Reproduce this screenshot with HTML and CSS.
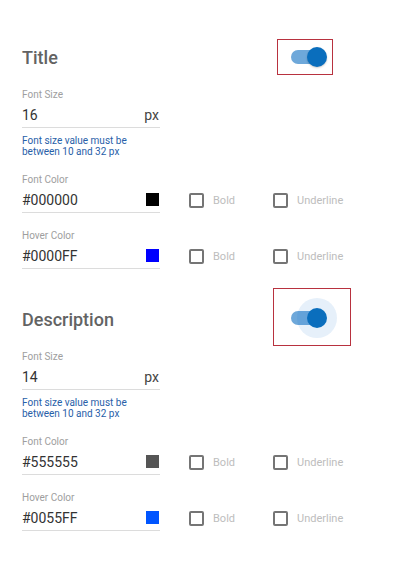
FILE: index.html
```html
<!DOCTYPE html>
<html lang="en">
  <head>
    <meta charset="UTF-8" />
    <meta name="viewport" content="width=device-width, initial-scale=1.0" />
    <title>Text Styles</title>
    <link rel="stylesheet" href="styles.css">
  </head>
  <body>
    <div class="panel">
      <!-- Title styles -->
      <section class="style-section">
        <div class="section-head">
          <h2 class="section-title">Title</h2>
          <div class="switch-box">
            <span class="switch"><span class="switch-thumb"></span></span>
          </div>
        </div>

        <div class="field">
          <label class="field-label">Font Size</label>
          <div class="field-input">
            <span class="field-value">16</span>
            <span class="field-unit">px</span>
          </div>
          <p class="field-help">Font size value must be<br />between 10 and 32 px</p>
        </div>

        <div class="field">
          <label class="field-label">Font Color</label>
          <div class="field-row">
            <div class="field-input">
              <span class="field-value">#000000</span>
              <span class="swatch" style="background: #000000"></span>
            </div>
            <label class="check"><span class="check-box"></span>Bold</label>
            <label class="check"><span class="check-box"></span>Underline</label>
          </div>
        </div>

        <div class="field">
          <label class="field-label">Hover Color</label>
          <div class="field-row">
            <div class="field-input">
              <span class="field-value">#0000FF</span>
              <span class="swatch" style="background: #0000ff"></span>
            </div>
            <label class="check"><span class="check-box"></span>Bold</label>
            <label class="check"><span class="check-box"></span>Underline</label>
          </div>
        </div>
      </section>

      <!-- Description styles -->
      <section class="style-section">
        <div class="section-head">
          <h2 class="section-title">Description</h2>
          <div class="switch-box is-focused">
            <span class="switch"><span class="switch-thumb"></span></span>
          </div>
        </div>

        <div class="field">
          <label class="field-label">Font Size</label>
          <div class="field-input">
            <span class="field-value">14</span>
            <span class="field-unit">px</span>
          </div>
          <p class="field-help">Font size value must be<br />between 10 and 32 px</p>
        </div>

        <div class="field">
          <label class="field-label">Font Color</label>
          <div class="field-row">
            <div class="field-input">
              <span class="field-value">#555555</span>
              <span class="swatch" style="background: #555555"></span>
            </div>
            <label class="check"><span class="check-box"></span>Bold</label>
            <label class="check"><span class="check-box"></span>Underline</label>
          </div>
        </div>

        <div class="field">
          <label class="field-label">Hover Color</label>
          <div class="field-row">
            <div class="field-input">
              <span class="field-value">#0055FF</span>
              <span class="swatch" style="background: #0055ff"></span>
            </div>
            <label class="check"><span class="check-box"></span>Bold</label>
            <label class="check"><span class="check-box"></span>Underline</label>
          </div>
        </div>
      </section>
    </div>
  </body>
</html>
```

FILE: styles.css
```css
body {
  margin: 0;
  background-color: #ffffff;
  font-family: Roboto, "Noto Sans", Arial, sans-serif;
}

.panel {
  padding: 38px 0 0 22px;
}

.style-section + .style-section {
  margin-top: 31px;
}

/* Section header with toggle */
.section-head {
  display: flex;
  align-items: center;
  height: 38px;
  margin-bottom: 13px;
}

.section-title {
  width: 255px;
  margin: 0;
  font-size: 18px;
  font-weight: 500;
  color: #636363;
}

.switch-box {
  display: flex;
  align-items: center;
  box-sizing: border-box;
  width: 56px;
  height: 36px;
  padding-left: 13px;
  border: 1px solid #b8323f;
}

.switch-box.is-focused {
  width: 78px;
  height: 58px;
  padding: 2px 0 0 17px;
  margin: -12px 0 -8px -4px;
}

.switch {
  position: relative;
  width: 34px;
  height: 14px;
  border-radius: 7px;
  background-color: #6ea8da;
}

.switch-thumb {
  position: absolute;
  top: -3px;
  right: -2px;
  width: 20px;
  height: 20px;
  border-radius: 50%;
  background-color: #0a6ebd;
  box-shadow: 0 1px 2px rgba(0, 0, 0, 0.2);
}

.is-focused .switch-thumb {
  box-shadow: 0 0 0 10px rgba(25, 118, 210, 0.11);
}

/* Fields */
.field + .field {
  margin-top: 17px;
}

.field-label {
  display: block;
  margin-bottom: 1px;
  font-size: 10px;
  line-height: 12px;
  color: #9e9e9e;
}

.field-row {
  display: flex;
  align-items: center;
}

.field-input {
  display: flex;
  align-items: center;
  justify-content: space-between;
  width: 138px;
  height: 26px;
  box-sizing: border-box;
  padding-right: 1px;
  border-bottom: 1px solid #dcdcdc;
  font-size: 14px;
  color: #333333;
}

.field-unit {
  color: #444444;
}

.swatch {
  width: 13px;
  height: 13px;
}

.field-help {
  margin: 7px 0 3px;
  font-size: 10px;
  line-height: 11px;
  color: #2760a8;
}

/* Checkboxes */
.check {
  display: flex;
  align-items: center;
  gap: 9px;
  width: 84px;
  font-size: 11px;
  color: #bdbdbd;
}

.field-input + .check {
  margin-left: 29px;
}

.check-box {
  width: 15px;
  height: 15px;
  box-sizing: border-box;
  border: 2px solid #757575;
  border-radius: 2px;
}
```
